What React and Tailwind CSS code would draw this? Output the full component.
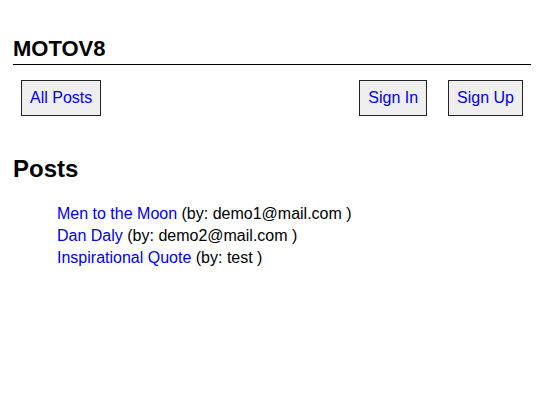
export default function App() {
  const posts = [
    { title: "Men to the Moon", by: "demo1@mail.com" },
    { title: "Dan Daly", by: "demo2@mail.com" },
    { title: "Inspirational Quote", by: "test" },
  ];

  return (
    <div className="min-h-screen bg-white pl-[13px] pr-[6px] pt-[36px] font-['Liberation_Sans',Arial,sans-serif] text-black">
      {/* Header */}
      <h1 className="border-b border-black pb-[3px] text-[22px] font-bold leading-[25px]">MOTOV8</h1>

      {/* Nav */}
      <nav className="mt-[15px] flex items-center pl-2 pr-[8px]">
        <a href="#" className="flex h-[36px] items-center border border-[#222] bg-[#efefef] px-[8px] text-[16px] text-[#0000ee]">
          All Posts
        </a>
        <div className="ml-auto flex gap-[21px]">
          <a href="#" className="flex h-[36px] items-center border border-[#222] bg-[#efefef] px-[8px] text-[16px] text-[#0000ee]">
            Sign In
          </a>
          <a href="#" className="flex h-[36px] items-center border border-[#222] bg-[#efefef] px-[8px] text-[16px] text-[#0000ee]">
            Sign Up
          </a>
        </div>
      </nav>

      {/* Posts */}
      <h2 className="mt-[39px] text-[24px] font-bold leading-[28px]">Posts</h2>
      <ul className="mt-[20px] pl-[44px] text-[16px] leading-[22px]">
        {posts.map((p) => (
          <li key={p.title}>
            <a href="#" className="text-[#0000ee]">{p.title}</a> (by: {p.by} )
          </li>
        ))}
      </ul>
    </div>
  );
}
